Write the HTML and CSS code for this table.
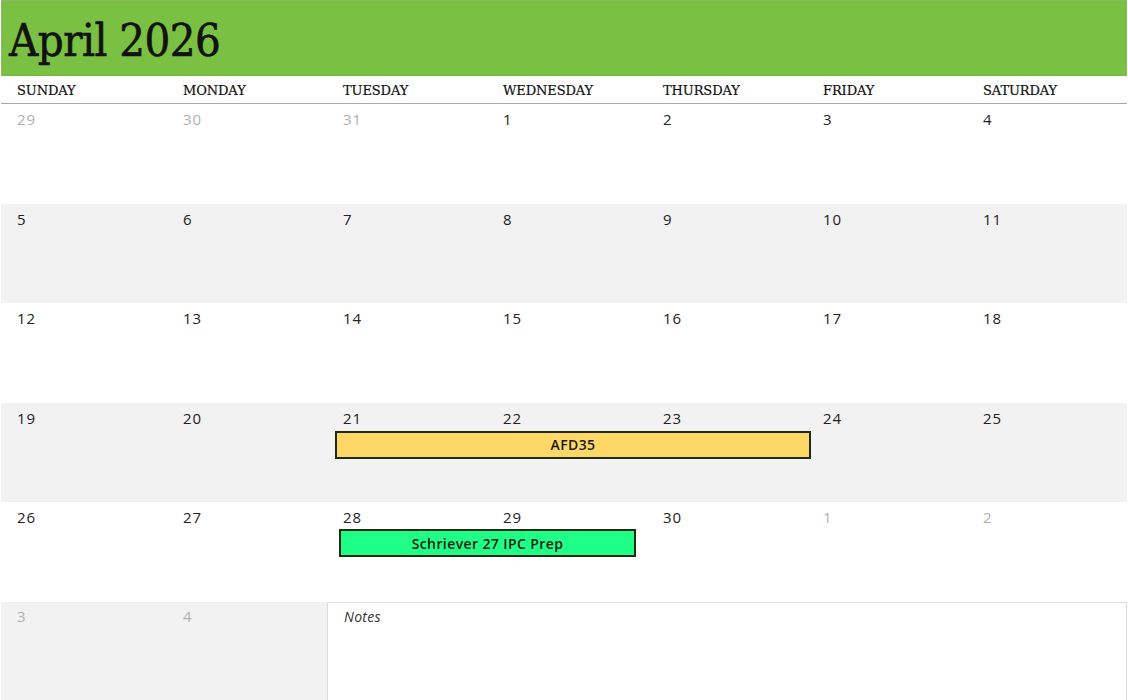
FILE: index.html
```html
<!DOCTYPE html>
<html lang="en">
<head>
<meta charset="utf-8">
<title>April 2026</title>
<link rel="stylesheet" href="styles.css">
</head>
<body>
<div class="page">
  <header class="banner"><h1 class="title">April 2026</h1></header>
  <div class="weekdays">
    <div>SUNDAY</div><div>MONDAY</div><div>TUESDAY</div><div>WEDNESDAY</div><div>THURSDAY</div><div>FRIDAY</div><div>SATURDAY</div>
  </div>

  <div class="week">
    <div class="num out">29</div><div class="num out">30</div><div class="num out">31</div><div class="num">1</div><div class="num">2</div><div class="num">3</div><div class="num">4</div>
  </div>
  <div class="week alt">
    <div class="num">5</div><div class="num">6</div><div class="num">7</div><div class="num">8</div><div class="num">9</div><div class="num">10</div><div class="num">11</div>
  </div>
  <div class="week">
    <div class="num">12</div><div class="num">13</div><div class="num">14</div><div class="num">15</div><div class="num">16</div><div class="num">17</div><div class="num">18</div>
  </div>
  <div class="week alt">
    <div class="num">19</div><div class="num">20</div><div class="num">21</div><div class="num">22</div><div class="num">23</div><div class="num">24</div><div class="num">25</div>
    <div class="event yellow span-3-6">AFD35</div>
  </div>
  <div class="week">
    <div class="num">26</div><div class="num">27</div><div class="num">28</div><div class="num">29</div><div class="num">30</div><div class="num out">1</div><div class="num out">2</div>
    <div class="event green span-3-5">Schriever 27 IPC Prep</div>
  </div>
  <div class="week alt last">
    <div class="num out">3</div><div class="num out">4</div>
    <div class="notes">Notes</div>
  </div>
</div>
</body>
</html>
```

FILE: styles.css
```css
html, body {
  margin: 0;
  padding: 0;
  background: #ffffff;
}

.page {
  width: 1126px;
  margin: 0 1px;
  font-family: "Open Sans", "DejaVu Sans", sans-serif;
  color: #222;
}

.banner {
  height: 76px;
  box-sizing: border-box;
  background: #7ac143;
  border: 1px solid #8fb56a;
  border-bottom: 1px solid #76b83e;
  display: flex;
  align-items: center;
  padding-left: 7px;
}

.title {
  margin: 0;
  margin-top: 5px;
  font-family: "DejaVu Serif", serif;
  font-stretch: condensed;
  font-weight: normal;
  font-size: 45px;
  letter-spacing: -0.5px;
  color: #111;
  -webkit-text-stroke: 0.6px #111;
}

.weekdays {
  display: grid;
  grid-template-columns: 166px repeat(6, 160px);
  height: 28px;
  box-sizing: border-box;
  padding-top: 2px;
  border-bottom: 1px solid #a8a8a8;
  align-items: center;
  font-family: "DejaVu Serif", serif;
  font-size: 13px;
  letter-spacing: -0.1px;
  color: #111;
}

.weekdays > div {
  padding-left: 16px;
  -webkit-text-stroke: 0.2px #111;
}

.week {
  display: grid;
  grid-template-columns: 166px repeat(6, 160px);
  grid-template-rows: auto auto 1fr;
  height: 99.5px;
  background: #ffffff;
}

.week.alt {
  background: #f2f2f2;
}

.num {
  grid-row: 1;
  padding: 5px 0 0 16px;
  font-size: 15px;
  line-height: 20px;
  letter-spacing: 0.8px;
  color: #222;
}

.num.out {
  color: #b0b0b0;
}

.event {
  grid-row: 2;
  margin-top: 3px;
  height: 28px;
  box-sizing: border-box;
  border: 2px solid #1e2a14;
  display: flex;
  align-items: center;
  justify-content: center;
  font-weight: 600;
  font-size: 14px;
  letter-spacing: 0.4px;
  color: #1a1a1a;
}

.event.yellow {
  background: #fdd867;
}

.event.green {
  background: #1fff85;
  margin-top: 2px;
}

.span-3-6 {
  grid-column: 3 / 6;
  margin-left: 8px;
  margin-right: -4px;
}

.span-3-5 {
  grid-column: 3 / 5;
  margin-left: 12px;
  margin-right: 11px;
}

.week.last {
  grid-template-rows: 1fr;
}

.week.last .num {
  padding-top: 4px;
}

.notes {
  grid-column: 3 / 8;
  grid-row: 1;
  background: #ffffff;
  border: 1px solid #dcdcdc;
  border-bottom: none;
  padding: 4px 0 0 16px;
  font-style: italic;
  font-size: 14px;
  line-height: 20px;
  color: #333;
  letter-spacing: 0.3px;
}
```
